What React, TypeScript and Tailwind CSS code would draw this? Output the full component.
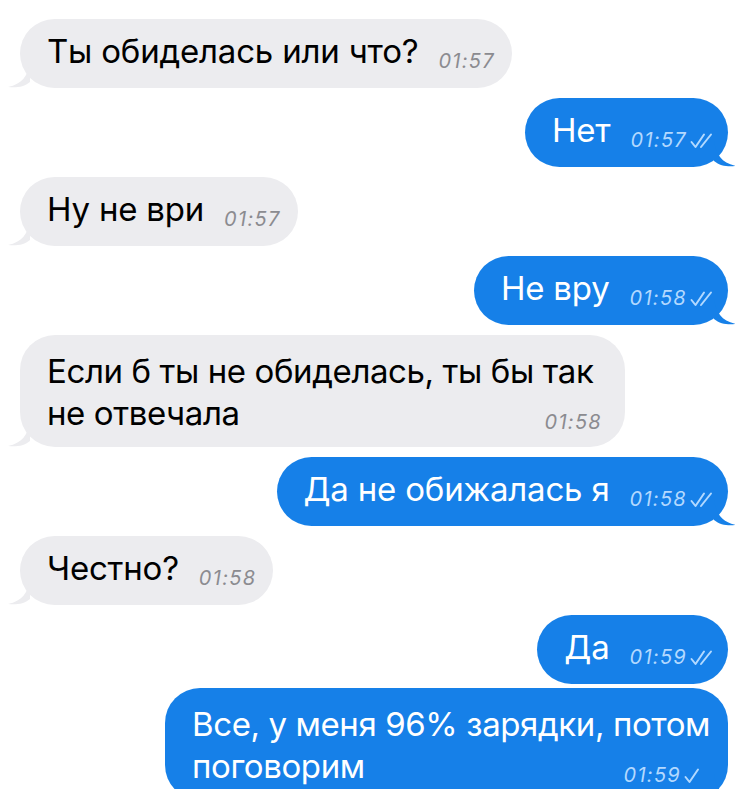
import React from 'react';

type Msg = {
  out: boolean;
  lines: string[];
  time: string;
  ticks?: 1 | 2;
  width?: string;
  tail?: boolean;
  gap?: string;
};

const messages: Msg[] = [
  { out: false, lines: ['Ты обиделась или что?'], time: '01:57', tail: true },
  { out: true, lines: ['Нет'], time: '01:57', ticks: 2, tail: true },
  { out: false, lines: ['Ну не ври'], time: '01:57', tail: true },
  { out: true, lines: ['Не вру'], time: '01:58', ticks: 2, tail: true },
  { out: false, lines: ['Если б ты не обиделась, ты бы так', 'не отвечала'], time: '01:58', width: 'w-[605px]', tail: true },
  { out: true, lines: ['Да не обижалась я'], time: '01:58', ticks: 2, tail: true },
  { out: false, lines: ['Честно?'], time: '01:58', tail: true },
  { out: true, lines: ['Да'], time: '01:59', ticks: 2 },
  { out: true, lines: ['Все, у меня 96% зарядки, потом', 'поговорим'], time: '01:59', ticks: 1, width: 'w-[563px]', tail: true, gap: '-mt-[6px]' },
];

function Ticks({ count }: { count: 1 | 2 }) {
  return (
    <svg width="23" height="16" viewBox="0 0 23 16" className="ml-[3px] mb-[1px]" fill="none" stroke="#b3d9ff" strokeWidth="2" strokeLinecap="round" strokeLinejoin="round">
      <path d="M1.5 9 L5.5 14 L14 1.5" />
      {count === 2 && <path d="M11 14 L21 1.5" />}
    </svg>
  );
}

function Time({ m }: { m: Msg }) {
  return (
    <span className="flex items-end shrink-0 translate-y-[2px]">
      <span
        className={`italic text-[20px] leading-none tracking-[1.3px] ${m.out ? 'text-[#b3d9ff]' : 'text-[#8b8b90]'}`}
      >
        {m.time}
      </span>
      {m.ticks && <Ticks count={m.ticks} />}
    </span>
  );
}

function Tail({ out }: { out: boolean }) {
  if (out) {
    return (
      <svg width="22" height="26" viewBox="0 0 22 26" className="absolute -right-[8px] bottom-0">
        <path d="M0 0 C2 14 8 22 22 25 C14 26 6 25 0 20 Z" fill="#1680e8" />
      </svg>
    );
  }
  return (
    <svg width="22" height="26" viewBox="0 0 22 26" className="absolute -left-[12px] bottom-0">
      <path d="M22 0 C20 14 14 22 0 25 C8 26 16 25 22 20 Z" fill="#ececef" />
    </svg>
  );
}

function Bubble({ m }: { m: Msg }) {
  const multi = m.lines.length > 1;
  return (
    <div className={`flex ${m.gap ?? ''} ${m.out ? 'justify-end pr-[7px]' : 'justify-start pl-[20px]'}`}>
      <div
        className={`relative rounded-[35px] ${m.width ?? ''} ${
          m.out ? 'bg-[#1680e8] text-white pr-[15px]' : 'bg-[#ececef] text-black pr-[17px]'
        } pl-[27px] ${multi ? 'pt-[15px] pb-[13px]' : 'h-[69px] pt-[14px]'}`}
      >
        {m.tail && <Tail out={m.out} />}
        {multi ? (
          <div className="text-[33px] leading-[42px] tracking-[-0.4px] whitespace-nowrap">
            <div>{m.lines[0]}</div>
            <div className="flex items-end justify-between">
              <span>{m.lines[1]}</span>
              <span className="pb-[4px] pr-[6px]">
                <Time m={m} />
              </span>
            </div>
          </div>
        ) : (
          <div className="flex items-end gap-[20px]">
            <span className="text-[33px] leading-[36px] tracking-[-0.2px]">{m.lines[0]}</span>
            <Time m={m} />
          </div>
        )}
      </div>
    </div>
  );
}

export default function App() {
  return (
    <div
      className="w-[735px] h-[789px] overflow-hidden bg-white flex flex-col gap-[10px] pt-[19px]"
      style={{ fontFamily: 'Inter, "Liberation Sans", sans-serif' }}
    >
      {messages.map((m, i) => (
        <Bubble key={i} m={m} />
      ))}
    </div>
  );
}
